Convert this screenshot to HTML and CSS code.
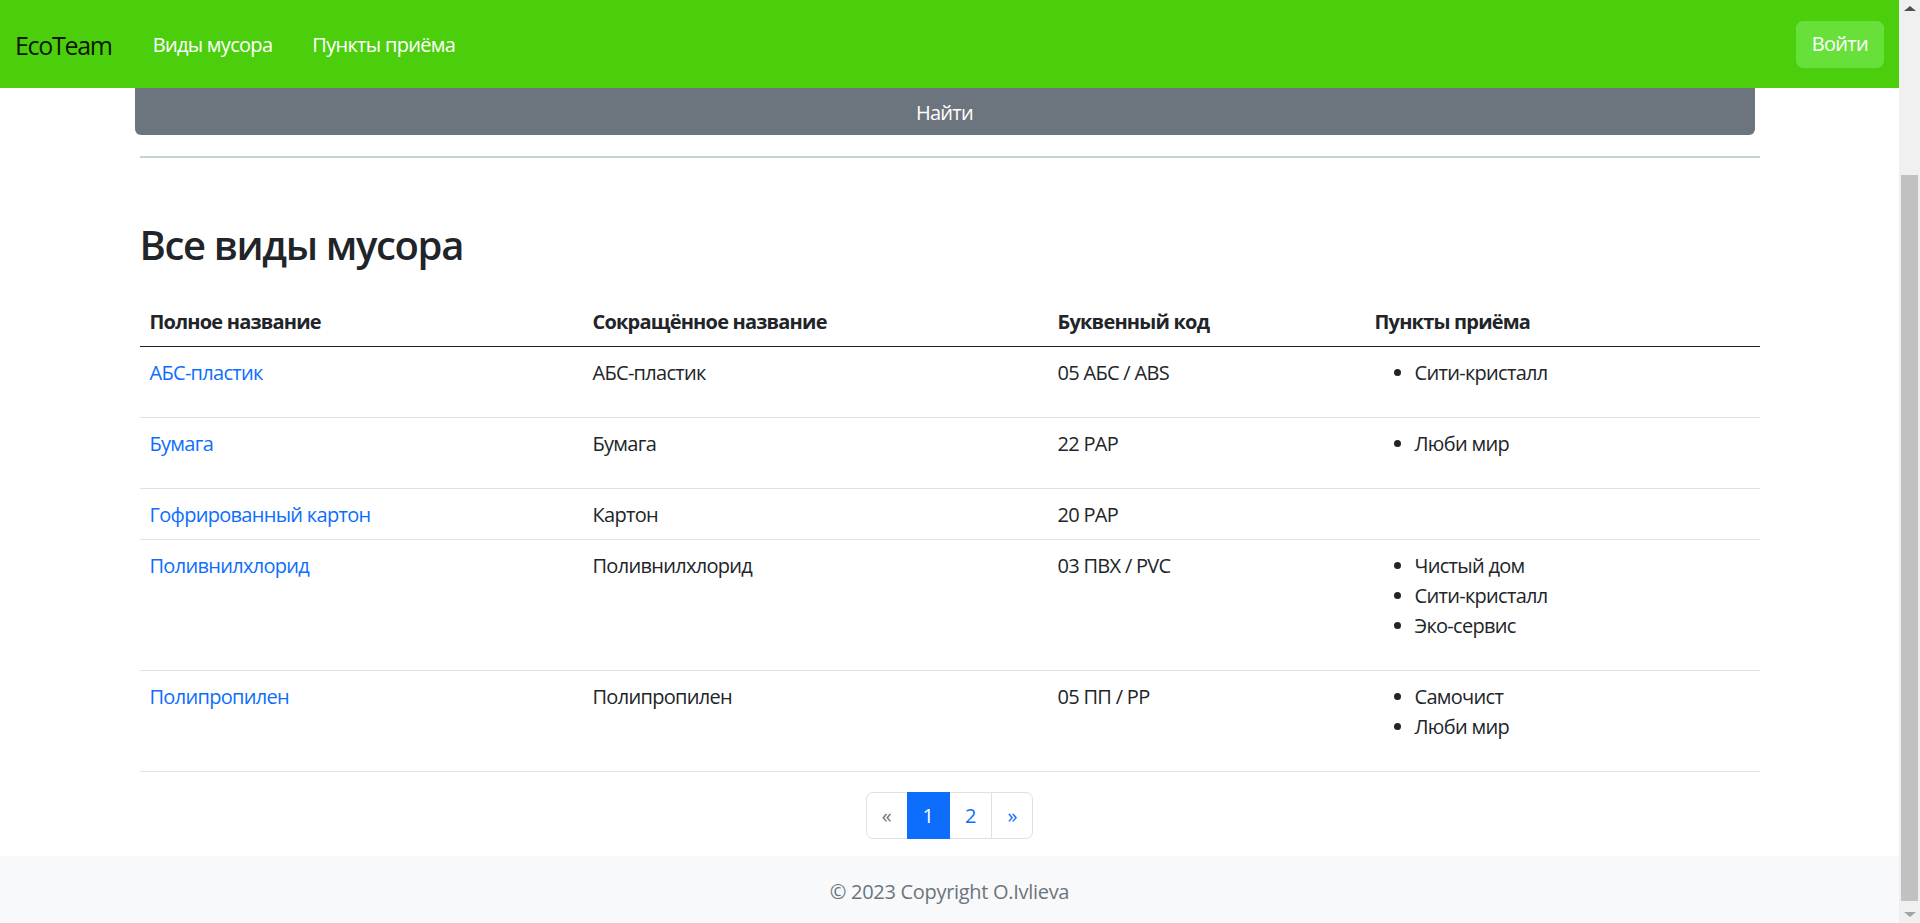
FILE: index.html
```html
<!DOCTYPE html>
<html lang="ru">
<head>
<meta charset="utf-8">
<title>EcoTeam</title>
<link rel="stylesheet" href="styles.css">
</head>
<body>
<div class="window">
  <div class="page">
    <nav class="navbar">
      <a class="brand" href="#">EcoTeam</a>
      <ul class="nav">
        <li><a href="#">Виды мусора</a></li>
        <li><a href="#">Пункты приёма</a></li>
      </ul>
      <button class="btn-login" type="button">Войти</button>
    </nav>
    <main class="container">
      <button class="btn-find" type="button">Найти</button>
      <hr class="divider">
      <h2 class="title">Все виды мусора</h2>
      <table class="table">
        <colgroup>
          <col class="c1"><col class="c2"><col class="c3"><col class="c4">
        </colgroup>
        <thead>
          <tr><th>Полное название</th><th>Сокращённое название</th><th>Буквенный код</th><th>Пункты приёма</th></tr>
        </thead>
        <tbody>
          <tr>
            <td><a href="#">АБС-пластик</a></td><td>АБС-пластик</td><td>05 АБС / ABS</td>
            <td><ul><li>Сити-кристалл</li></ul></td>
          </tr>
          <tr>
            <td><a href="#">Бумага</a></td><td>Бумага</td><td>22 PAP</td>
            <td><ul><li>Люби мир</li></ul></td>
          </tr>
          <tr>
            <td><a href="#">Гофрированный картон</a></td><td>Картон</td><td>20 PAP</td>
            <td></td>
          </tr>
          <tr>
            <td><a href="#">Поливнилхлорид</a></td><td>Поливнилхлорид</td><td>03 ПВХ / PVC</td>
            <td><ul><li>Чистый дом</li><li>Сити-кристалл</li><li>Эко-сервис</li></ul></td>
          </tr>
          <tr>
            <td><a href="#">Полипропилен</a></td><td>Полипропилен</td><td>05 ПП / PP</td>
            <td><ul><li>Самочист</li><li>Люби мир</li></ul></td>
          </tr>
        </tbody>
      </table>
      <nav class="pager">
        <ul class="pagination">
          <li><a class="page-link disabled" href="#">«</a></li>
          <li><a class="page-link active" href="#">1</a></li>
          <li><a class="page-link" href="#">2</a></li>
          <li><a class="page-link" href="#">»</a></li>
        </ul>
      </nav>
    </main>
    <footer class="footer">© 2023 Copyright O.Ivlieva</footer>
  </div>
  <div class="scrollbar">
    <div class="arrow-up"></div>
    <div class="track"><div class="thumb"></div></div>
    <div class="arrow-down"></div>
  </div>
</div>
</body>
</html>
```
FILE: styles.css
```css
* { box-sizing: border-box; }
html, body { margin: 0; padding: 0; height: 923px; overflow: hidden; }
body {
  font-family: "Open Sans", "Noto Sans", sans-serif;
  font-size: 20px;
  line-height: 30px;
  letter-spacing: -0.7px;
  color: #212529;
  background: #fff;
}
a { text-decoration: none; }

.window { display: flex; height: 923px; }
.page { flex: 1; display: flex; flex-direction: column; min-width: 0; }

/* navbar */
.navbar {
  height: 88px;
  flex: none;
  background: #4bcf0c;
  display: flex;
  align-items: center;
  padding: 1px 15px 0 15px;
}
.brand { font-size: 25px; line-height: 36px; letter-spacing: -1.3px; color: rgba(0,0,0,.9); margin-right: 21px; }
.nav { list-style: none; display: flex; margin: 0; padding: 0; }
.nav a { display: block; color: #fff; padding: 0 20px; line-height: 30px; }
.btn-login {
  margin-left: auto;
  background: #67e13a;
  color: #fff;
  border: 1px solid #67e13a;
  border-radius: 7px;
  font: inherit;
  letter-spacing: -0.7px;
  padding: 7px 15px 8px;
  line-height: 30px;
}

/* main */
.container { width: 1620px; margin: 0 auto; flex: none; }
.btn-find {
  display: block;
  width: 1620px;
  margin-left: -5px;
  height: 47px;
  padding-top: 3px;
  background: #6c757d;
  color: #fff;
  border: 0;
  border-radius: 0 0 6px 6px;
  font: inherit;
  letter-spacing: -0.7px;
}
.divider { margin: 21px 0 0; border: 0; border-top: 2px solid #c6d3d5; height: 0; }
.title { font-size: 40px; line-height: 48px; font-weight: 600; letter-spacing: -1.35px; margin: 63px 0 0; }

.table { width: 100%; border-collapse: collapse; margin: 27px 0 20px; table-layout: fixed; }
.c1 { width: 443px; } .c2 { width: 465px; } .c3 { width: 317px; }
.table th, .table td { text-align: left; vertical-align: top; padding: 11px 10px 9px; }
.table th { font-weight: 700; letter-spacing: -0.8px; border-bottom: 1px solid #212529; }
.table td { border-bottom: 1px solid #dee2e6; }
.table td a { color: #0d6efd; }
.table ul { margin: 0 0 20px; padding-left: 40px; }

.pagination { list-style: none; display: flex; justify-content: center; margin: 0; padding: 0; letter-spacing: 0; }
.page-link {
  display: block;
  padding: 8px 15px 7px;
  line-height: 30px;
  border: 1px solid #dee2e6;
  margin-left: -1px;
  color: #0d6efd;
  background: #fff;
}
.pagination li:first-child .page-link { border-radius: 7px 0 0 7px; margin-left: 0; }
.pagination li:last-child .page-link { border-radius: 0 7px 7px 0; }
.page-link.disabled { color: #6c757d; }
.page-link.active { background: #0d6efd; border-color: #0d6efd; color: #fff; position: relative; }

.footer {
  margin-top: 17px;
  flex: 1;
  background: #f8f9fa;
  color: #6c757d;
  text-align: center;
  letter-spacing: -0.3px;
  padding: 21px 20px 20px;
}

/* scrollbar */
.scrollbar { width: 21px; flex: none; background: #f0f0f0; display: flex; flex-direction: column; align-items: center; }
.arrow-up { width: 0; height: 0; margin-top: 6px; border-left: 6px solid transparent; border-right: 6px solid transparent; border-bottom: 5px solid #505050; }
.track { flex: 1; width: 100%; padding: 0 2px; }
.thumb { margin-top: 164px; height: 726px; background: #c1c1c1; }
.arrow-down { width: 0; height: 0; margin-bottom: 6px; margin-top: 6px; border-left: 6px solid transparent; border-right: 6px solid transparent; border-top: 5px solid #a3a3a3; }
```
